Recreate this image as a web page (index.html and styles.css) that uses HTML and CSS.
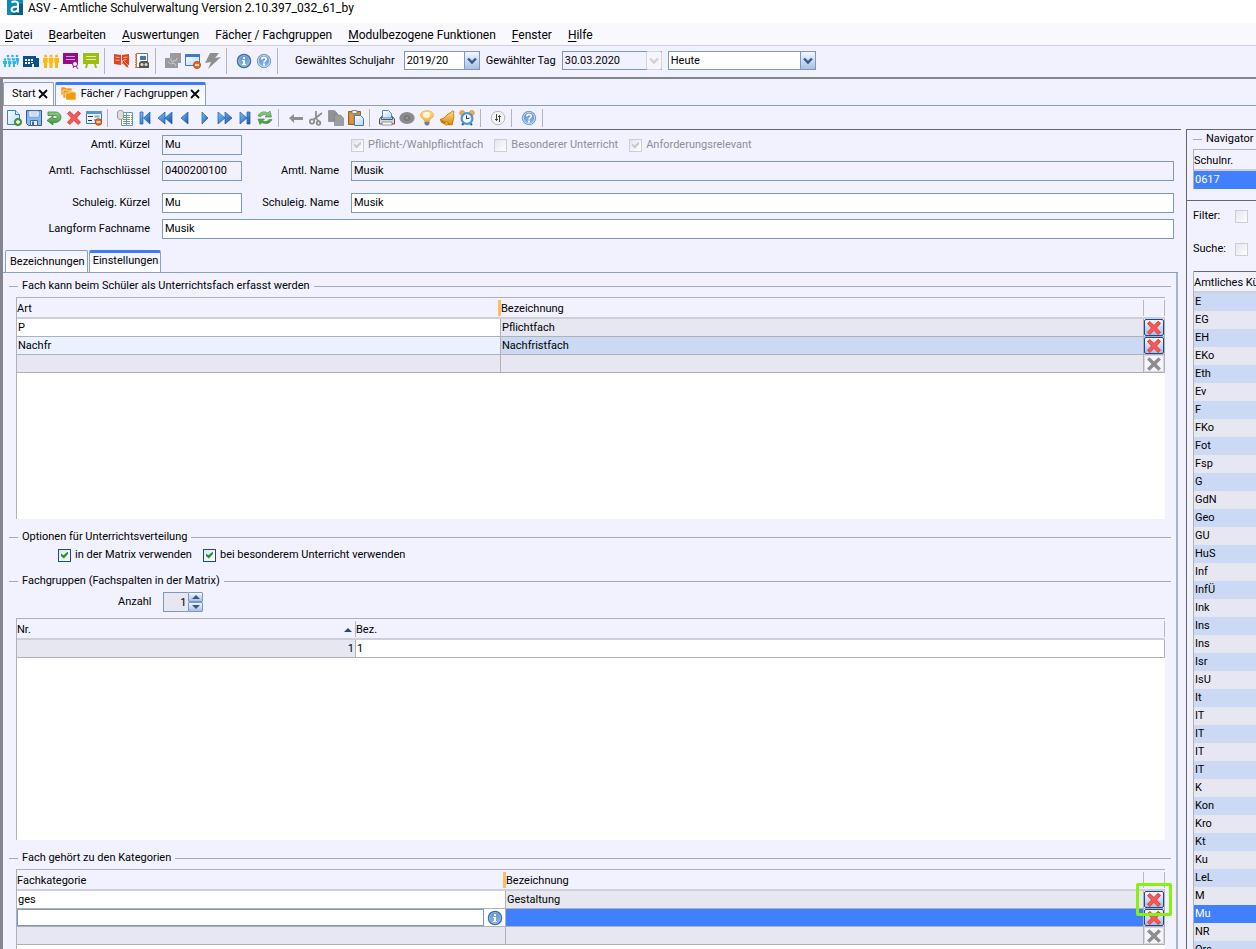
FILE: index.html
```html
<!DOCTYPE html>
<html lang="de">
<head>
  <meta charset="UTF-8" />
  <meta name="viewport" content="width=device-width, initial-scale=1.0" />
  <title>ASV - Amtliche Schulverwaltung</title>
  <link rel="stylesheet" href="styles.css">
</head>
<body>
  <svg class="sprite" aria-hidden="true">
    <defs>
      <linearGradient id="g-blue" x1="0" y1="0" x2="1" y2="1"><stop offset="0" stop-color="#7fc4f5"/><stop offset="1" stop-color="#1555b5"/></linearGradient>
      <linearGradient id="g-round" x1="0" y1="0" x2="0" y2="1"><stop offset="0" stop-color="#5d8fc9"/><stop offset="1" stop-color="#8db9e6"/></linearGradient>
      <linearGradient id="g-paper" x1="0" y1="0" x2="1" y2="1"><stop offset="0" stop-color="#fff"/><stop offset="1" stop-color="#b4dafa"/></linearGradient>
      <linearGradient id="g-gold" x1="0" y1="0" x2="0" y2="1"><stop offset="0" stop-color="#ffe07a"/><stop offset="1" stop-color="#e08a10"/></linearGradient>
      <linearGradient id="g-bulb" x1="0" y1="0" x2="0" y2="1"><stop offset="0" stop-color="#ffdc8c"/><stop offset="1" stop-color="#fbb348"/></linearGradient>
      <linearGradient id="g-green" x1="0" y1="0" x2="0" y2="1"><stop offset="0" stop-color="#8fce7e"/><stop offset="1" stop-color="#3e9440"/></linearGradient>
    </defs>
    <symbol id="i-logo" viewBox="0 0 16 16"><path fill="#0d88b8" d="M0 0h16v15H0z"/><path fill="#085f8e" d="M12 4h4v11H4z"/><path fill="none" stroke="#fff" stroke-width="2" d="M4.500 2.500c2-1.500 6.500-1.500 6.500 1.500v8.500M11 6.500c-3 0-6.500.3-6.500 3 0 3.300 5.500 2.800 6.500-.5"/></symbol>
    <symbol id="i-pupils" viewBox="0 0 16 16"><g fill="#35b5e0"><circle cx="5" cy="3" r="1.300"/><circle cx="9.500" cy="3" r="1.300"/><circle cx="14" cy="3" r="1.300"/><circle cx="2" cy="6.500" r="1.300"/><circle cx="6.500" cy="6.500" r="1.300"/><circle cx="11" cy="6.500" r="1.300"/><path d="M0 8h4v3H3v3H1v-3H0zM5 8h3.500v3h-1v3h-2v-3H5zM9.500 8H13v3h-1v3h-2v-3h-.5zM4 5h2l-1 3zM8.500 5h2l-1 3zM12.500 5H16v3l-1 4h-1z"/></g></symbol>
    <symbol id="i-school" viewBox="0 0 16 16"><path fill="#0a4f8e" d="M0 3h13v2h3v9h-5v-3H9v3H0z"/><path fill="#fff" d="M2 6h2v2H2zM5 6h2v2H5zM8 6h2v2H8zM2 9h2v2H2zM5 9h2v2H5zM8 9h2v1H8z"/></symbol>
    <symbol id="i-teachers" viewBox="0 0 16 16"><g fill="#fbba10"><circle cx="2.500" cy="3" r="1.600"/><circle cx="8" cy="3" r="1.600"/><circle cx="13.500" cy="3" r="1.600"/><path d="M0 5h4.700v5H4v5H1v-5H0zM5.700 5h4.600v5h-.8v5h-3v-5h-.8zM11.300 5H16v5h-1v5h-3v-5h-.7z"/></g></symbol>
    <symbol id="i-class" viewBox="0 0 16 16"><path fill="#8f0f86" d="M0 0h15v11H0z"/><path stroke="#d79bd3" d="M3 3.500h9M3 6.500h9"/><circle cx="12" cy="11" r="2.500" fill="#f2f2ff" stroke="#8f0f86"/><path stroke="#8f0f86" d="M13 13l2 3M11 13l-1 2"/></symbol>
    <symbol id="i-lesson" viewBox="0 0 16 16"><path fill="#9cbd11" d="M0 0h16v11H0zM3 11h2l-1 4H2zM11 11h2l1 4h-2z"/><path stroke="#e3efaa" d="M3 3.500h10M3 6.500h10"/></symbol>
    <symbol id="i-book" viewBox="0 0 16 16"><path fill="#e0431c" d="M0 1l7 1v10l-7-1zM8 2l7-1v11l-7-1z"/><path stroke="#f6b8a5" d="M1.500 4l4 .5M1.500 7l4 .5M9.500 4.500l4-.5M9.500 7l3-.5"/><path fill="#e0431c" stroke="#fff" stroke-width=".5" d="M9 7l5 5 1 3-3-1-4-5z"/></symbol>
    <symbol id="i-report" viewBox="0 0 16 16"><path fill="#fff" stroke="#777" d="M2.500.5h11v14h-11z"/><path stroke="#e07b28" stroke-width="2" stroke-dasharray="1.500 1" d="M2 1v14"/><path fill="#3f78bd" d="M6 3h6v4H6z"/><path fill="#555" d="M5 10l2-2h6l2 2v5H5z"/><circle cx="8" cy="11.500" r="1.500" fill="#ddd"/><circle cx="12" cy="11.500" r="1.500" fill="#ddd"/></symbol>
    <symbol id="i-puzzle" viewBox="0 0 16 16"><path fill="#9a9a9c" d="M5 0h11v10h-3v5H0V5h5z"/><path fill="none" stroke="#c9c9cd" d="M6 5v3l2 1 1-2 2 1 1-3M3 9l3 2 3-1 2 3"/></symbol>
    <symbol id="i-window" viewBox="0 0 16 16"><path fill="url(#g-paper)" stroke="#3f7ac2" d="M.5 1.500h14v11H.5z"/><path fill="#3f7ac2" d="M0 1h15v3H0z"/><circle cx="12" cy="12" r="3.500" fill="#ec6e1c" stroke="#c04c09"/><path stroke="#fff" stroke-width="1.500" d="M10 12h4"/></symbol>
    <symbol id="i-flash" viewBox="0 0 16 16"><path fill="#8f8f91" d="M5 0h9l-4 5 6-1L3 16l3-7-6 1z"/></symbol>
    <symbol id="i-info" viewBox="0 0 16 16"><circle cx="8" cy="8" r="6.500" fill="url(#g-round)" stroke="#3a6cae" stroke-width="1.500"/><circle cx="8" cy="8" r="5.500" fill="none" stroke="#b9d5f2" stroke-width=".6"/><path fill="#fff" d="M7 4h2v2H7zM6 7h3v4h1v1H6v-1h1V8H6z"/></symbol>
    <symbol id="i-help" viewBox="0 0 16 16"><circle cx="8" cy="8" r="6.700" fill="url(#g-round)" stroke="#6f9dd0"/><circle cx="8" cy="8" r="5.700" fill="none" stroke="#d4e6f8" stroke-width=".8"/><path fill="none" stroke="#fff" stroke-width="1.700" d="M5.800 6.500c0-3 4.600-2.800 4.500-.2C10.200 7.800 8 7.500 8 9.500"/><path fill="#fff" d="M7 10.500h2v2H7z"/></symbol>
    <symbol id="i-folder" viewBox="0 0 16 16"><g fill="#f39a0c" stroke="#fff" stroke-width=".6"><path d="M0 1h4l1 1h6v7H0z"/><path d="M2 4h4l1 1h6v7H2z"/><path d="M4 7h4l1-1h6v8H5z"/></g></symbol>
    <symbol id="i-close" viewBox="0 0 10 10"><path stroke="#000" stroke-width="1.800" d="M1 1l8 8M9 1L1 9"/></symbol>
    <symbol id="i-new" viewBox="0 0 16 16"><path fill="url(#g-paper)" stroke="#3f7fc4" d="M1.500.5h8l4 4v10h-12z"/><path fill="#d6ebfc" stroke="#3f7fc4" d="M9.500.5v4h4"/><circle cx="12" cy="12" r="3.500" fill="#58a243" stroke="#357a28"/><path stroke="#fff" stroke-width="1.300" d="M10 12h4M12 10v4"/></symbol>
    <symbol id="i-save" viewBox="0 0 16 16"><path fill="#8db8ea" stroke="#2b5ca0" d="M.5.5h15v15H2.500l-2-2z"/><path fill="#fff" stroke="#6190c8" stroke-width=".7" d="M3 1h10v6H3z"/><path stroke="#9ab8db" d="M4.500 3h7M4.500 5h7"/><path fill="#eee" stroke="#3b68a4" d="M4.500 10.500h7v5h-7z"/><path fill="#3b68a4" d="M6 11.500h2V15H6z"/></symbol>
    <symbol id="i-undo" viewBox="0 0 16 16"><path fill="url(#g-green)" stroke="#388a3a" stroke-width=".8" d="M2 2h7c8 0 8 10.500 0 10.500H7V15l-6-4.500L7 6v2.500h2c3 0 3-3 0-3H2z"/></symbol>
    <symbol id="i-delete" viewBox="0 0 16 16"><path fill="#f65a52" stroke="#d92a29" stroke-width=".8" d="M1.500 3.500l2.300-2L8 5.500l4-4.200 2.500 2L10.500 8l4 4.300-2.500 2.200-4-4.200-4.200 4.200-2.300-2.300L5.500 8z"/></symbol>
    <symbol id="i-delete-off" viewBox="0 0 16 16"><path fill="#8d8d8f" d="M1 3.500l2.500-2.300L8 5.500l4.500-4.300L15 3.500 10.500 8l4.500 4.500-2.500 2.300L8 10.500l-4.500 4.300L1 12.500 5.500 8z"/></symbol>
    <symbol id="i-form" viewBox="0 0 16 16"><path fill="#edf5fd" stroke="#3a75bd" d="M.5 1.500h15v12H.5z"/><path fill="#5b95d6" d="M0 1h16v3H0z"/><path stroke="#333" d="M2 6.500h5M2 10.500h4"/><path stroke="#7eaddd" stroke-width="2" d="M8.500 6.500h5M8 10h3"/><circle cx="12.500" cy="12" r="3.300" fill="#ec6e1c" stroke="#c04c09"/><path stroke="#fff" stroke-width="1.400" d="M10.500 12h4"/></symbol>
    <symbol id="i-list" viewBox="0 0 16 16"><path fill="#fff" stroke="#6593ca" d="M4.500 2.500h11v13h-11z"/><path stroke="#76a15c" stroke-dasharray="3 1" d="M6 5.500h9M6 7.500h9M6 9.500h9M6 11.500h9M6 13.500h9"/><path fill="#ddd" stroke="#888" stroke-width=".8" d="M.5 2C2-.2 5-.2 6.500 2v6C5 10 2 10 .5 8z"/><path stroke="#6593ca" d="M9.500 3v12"/></symbol>
    <symbol id="i-first" viewBox="0 0 16 16"><path fill="url(#g-blue)" stroke="#1d57b0" stroke-width=".7" d="M3 2h3v12H3zM13 2v12L6.500 8z"/></symbol>
    <symbol id="i-rewind" viewBox="0 0 16 16"><path fill="url(#g-blue)" stroke="#1d57b0" stroke-width=".7" d="M8 2v12L1 8zM15 2v12L8 8z"/></symbol>
    <symbol id="i-prev" viewBox="0 0 16 16"><path fill="url(#g-blue)" stroke="#1d57b0" stroke-width=".7" d="M11 2v12L4 8z"/></symbol>
    <symbol id="i-next" viewBox="0 0 16 16"><path fill="url(#g-blue)" stroke="#1d57b0" stroke-width=".7" d="M5 2v12l6-6z"/></symbol>
    <symbol id="i-forward" viewBox="0 0 16 16"><path fill="url(#g-blue)" stroke="#1d57b0" stroke-width=".7" d="M1 2v12l7-6zM8 2v12l7-6z"/></symbol>
    <symbol id="i-last" viewBox="0 0 16 16"><path fill="url(#g-blue)" stroke="#1d57b0" stroke-width=".7" d="M10 2h3v12h-3zM3 2v12l7-6z"/></symbol>
    <symbol id="i-refresh" viewBox="0 0 16 16"><path fill="url(#g-green)" stroke="#388a3a" stroke-width=".6" d="M1 6c2-4.500 7-5 10-3l2-2 1.500 6H8l2-2C7 4 5 5 4 6.500zM15 9.500c-2 4.500-7 5-10 3l-2 2L1 9h6.500l-2 2c3 1 5 .5 6.500-1.500z"/></symbol>
    <symbol id="i-back" viewBox="0 0 16 16"><path fill="#8f8f91" d="M1 8l5-4v3h9v3H6v3z"/></symbol>
    <symbol id="i-cut" viewBox="0 0 16 16"><g fill="none" stroke="#8c8c8e" stroke-width="1.700"><path d="M8 1v7l3 4M14 3L5 10"/><circle cx="4" cy="11.500" r="2.200"/><circle cx="10.500" cy="13" r="1.800"/></g></symbol>
    <symbol id="i-copy" viewBox="0 0 16 16"><path fill="#929294" stroke="#7e7e80" stroke-width=".6" d="M.5.500h6l3 3v8h-9z"/><path fill="#9d9d9f" stroke="#7e7e80" stroke-width=".6" d="M6.500 5h6l3 3v7.500h-9z"/></symbol>
    <symbol id="i-paste" viewBox="0 0 16 16"><path fill="#cf8b35" stroke="#94601d" d="M.5 1.500h12v13H.5z"/><path fill="#eee" stroke="#777" stroke-width=".8" d="M4 .5h5v3H4z"/><path fill="#eaa" fill-opacity=".3" d="M2 4h3v9H2z"/><path fill="url(#g-paper)" stroke="#407bc1" d="M6.500 5.500h6l3 3v7h-9z"/></symbol>
    <symbol id="i-print" viewBox="0 0 16 16"><path fill="url(#g-paper)" stroke="#4b88c8" d="M3.500 8V.5h6l3 3V8z"/><path fill="#d8d8dc" stroke="#55565c" d="M2.500 6.500L.5 9v5h15V9l-2-2.500v3h-11z"/><path fill="#f7f7f7" stroke="#777" stroke-width=".7" d="M3 12h10v3H3z"/></symbol>
    <symbol id="i-eye" viewBox="0 0 16 16"><ellipse cx="8" cy="8" rx="7.700" ry="6" fill="#8c8c8e"/><ellipse cx="8" cy="8" rx="3.500" ry="3" fill="#7b7b7d"/><circle cx="8" cy="8" r="1" fill="#a5a5a7"/></symbol>
    <symbol id="i-bulb" viewBox="0 0 16 16"><path fill="url(#g-bulb)" stroke="#e9a243" stroke-width=".8" d="M8 .8c4 0 6.500 2.200 6.500 4.700S11 8.500 10.500 11h-5C5 8.500 1.500 8 1.500 5.500S4 .8 8 .8z"/><ellipse cx="7.500" cy="5" rx="3.500" ry="3" fill="#fff8d4"/><path fill="#777d88" d="M5.500 11.500h5V14L9 15.500H7L5.500 14z"/></symbol>
    <symbol id="i-bell" viewBox="0 0 16 16"><path fill="url(#g-gold)" stroke="#b06b0a" stroke-width=".8" d="M13.500.8l1.500 1-.5 1.700c.8 3 .2 5.500-.5 7.500l-1 4L1 9.500l4-1.500c2-2 3.500-4.500 7-5.500z"/><path fill="#c67c10" d="M1 9.500L13 15c-1.500 1-12 0-12-5.500z"/><circle cx="7.500" cy="13.500" r="1.700" fill="#f2bd43" stroke="#a8660b" stroke-width=".6"/></symbol>
    <symbol id="i-alarm" viewBox="0 0 16 16"><path stroke="#2c5da3" stroke-width="2" d="M3 15l2-2M13 15l-2-2"/><circle cx="3.200" cy="3" r="2.500" fill="#f0b13d" stroke="#c9861c" stroke-width=".6"/><circle cx="12.800" cy="3" r="2.500" fill="#f0b13d" stroke="#c9861c" stroke-width=".6"/><circle cx="8" cy="8.500" r="5.400" fill="#f4faff" stroke="#4e94d8" stroke-width="2.200"/><path fill="none" stroke="#333" d="M7.500 5.500v3.300L10.500 8"/></symbol>
    <symbol id="i-adjust" viewBox="0 0 16 16"><circle cx="8" cy="8" r="6.800" fill="#f3f3f3" stroke="#b9b9bd"/><path stroke="#444" d="M6.500 4v7M9.500 5v7M5 9.500h3M8 6.500h3"/></symbol>
    <symbol id="i-arrow" viewBox="0 0 10 8"><path fill="none" stroke="currentColor" stroke-width="2.400" d="M1 1.500l4 4 4-4"/></symbol>
    <symbol id="i-up" viewBox="0 0 8 4"><path fill="currentColor" d="M0 4l4-4 4 4z"/></symbol>
    <symbol id="i-down" viewBox="0 0 8 4"><path fill="currentColor" d="M0 0l4 4 4-4z"/></symbol>
  </svg>

  <header class="titlebar">
    <svg class="icon"><use href="#i-logo"/></svg>
    <span>ASV - Amtliche Schulverwaltung Version 2.10.397_032_61_by</span>
  </header>

  <nav class="menubar">
    <a href="#"><u>D</u>atei</a>
    <a href="#"><u>B</u>earbeiten</a>
    <a href="#"><u>A</u>uswertungen</a>
    <a href="#">Fäche<u>r</u> / Fachgruppen</a>
    <a href="#"><u>M</u>odulbezogene Funktionen</a>
    <a href="#"><u>F</u>enster</a>
    <a href="#"><u>H</u>ilfe</a>
  </nav>

  <div class="toolbar main-tools">
    <button class="tool" aria-label="Schüler"><svg class="icon"><use href="#i-pupils"/></svg></button>
    <button class="tool" aria-label="Schulen"><svg class="icon"><use href="#i-school"/></svg></button>
    <button class="tool" aria-label="Lehrkräfte"><svg class="icon"><use href="#i-teachers"/></svg></button>
    <button class="tool" aria-label="Klassen"><svg class="icon"><use href="#i-class"/></svg></button>
    <button class="tool" aria-label="Unterricht"><svg class="icon"><use href="#i-lesson"/></svg></button>
    <span class="sep"></span>
    <button class="tool" aria-label="Notenbuch"><svg class="icon"><use href="#i-book"/></svg></button>
    <button class="tool" aria-label="Berichte"><svg class="icon"><use href="#i-report"/></svg></button>
    <span class="sep"></span>
    <button class="tool" aria-label="Module" disabled><svg class="icon"><use href="#i-puzzle"/></svg></button>
    <button class="tool" aria-label="Fenster schließen"><svg class="icon"><use href="#i-window"/></svg></button>
    <button class="tool" aria-label="Ausführen" disabled><svg class="icon"><use href="#i-flash"/></svg></button>
    <span class="sep"></span>
    <button class="tool" aria-label="Info"><svg class="icon"><use href="#i-info"/></svg></button>
    <button class="tool" aria-label="Hilfe"><svg class="icon"><use href="#i-help"/></svg></button>
    <span class="sep"></span>
    <div class="period">
      <label for="year">Gewähltes Schuljahr</label>
      <span class="combo year">
        <select id="year"><option>2019/20</option></select>
        <span class="combo-arrow"><svg><use href="#i-arrow"/></svg></span>
      </span>
      <label for="day">Gewählter Tag</label>
      <span class="combo day">
        <select id="day" disabled><option>30.03.2020</option></select>
        <span class="combo-arrow"><svg><use href="#i-arrow"/></svg></span>
      </span>
      <span class="combo today">
        <select aria-label="Tag"><option>Heute</option></select>
        <span class="combo-arrow"><svg><use href="#i-arrow"/></svg></span>
      </span>
    </div>
  </div>

  <div class="workspace">
    <div class="doc-tabs">
      <div class="tab">
        <a href="#">Start</a>
        <button class="close" aria-label="Start schließen"><svg><use href="#i-close"/></svg></button>
      </div>
      <div class="tab active">
        <svg class="icon"><use href="#i-folder"/></svg>
        <a href="#">Fächer / Fachgruppen</a>
        <button class="close" aria-label="Fächer schließen"><svg><use href="#i-close"/></svg></button>
      </div>
    </div>

    <div class="toolbar doc-tools">
      <button class="tool" aria-label="Neu"><svg class="icon"><use href="#i-new"/></svg></button>
      <button class="tool" aria-label="Speichern"><svg class="icon"><use href="#i-save"/></svg></button>
      <button class="tool" aria-label="Rückgängig"><svg class="icon"><use href="#i-undo"/></svg></button>
      <button class="tool" aria-label="Löschen"><svg class="icon"><use href="#i-delete"/></svg></button>
      <button class="tool" aria-label="Formular schließen"><svg class="icon"><use href="#i-form"/></svg></button>
      <span class="sep"></span>
      <button class="tool" aria-label="Liste"><svg class="icon"><use href="#i-list"/></svg></button>
      <button class="tool" aria-label="Erster"><svg class="icon"><use href="#i-first"/></svg></button>
      <button class="tool" aria-label="Seite zurück"><svg class="icon"><use href="#i-rewind"/></svg></button>
      <button class="tool" aria-label="Voriger"><svg class="icon"><use href="#i-prev"/></svg></button>
      <button class="tool" aria-label="Nächster"><svg class="icon"><use href="#i-next"/></svg></button>
      <button class="tool" aria-label="Seite vor"><svg class="icon"><use href="#i-forward"/></svg></button>
      <button class="tool" aria-label="Letzter"><svg class="icon"><use href="#i-last"/></svg></button>
      <button class="tool" aria-label="Aktualisieren"><svg class="icon"><use href="#i-refresh"/></svg></button>
      <span class="sep"></span>
      <button class="tool" aria-label="Zurück" disabled><svg class="icon"><use href="#i-back"/></svg></button>
      <button class="tool" aria-label="Ausschneiden" disabled><svg class="icon"><use href="#i-cut"/></svg></button>
      <button class="tool" aria-label="Kopieren" disabled><svg class="icon"><use href="#i-copy"/></svg></button>
      <button class="tool" aria-label="Einfügen"><svg class="icon"><use href="#i-paste"/></svg></button>
      <span class="sep"></span>
      <button class="tool" aria-label="Drucken"><svg class="icon"><use href="#i-print"/></svg></button>
      <button class="tool" aria-label="Vorschau" disabled><svg class="icon"><use href="#i-eye"/></svg></button>
      <button class="tool" aria-label="Tipp"><svg class="icon"><use href="#i-bulb"/></svg></button>
      <button class="tool" aria-label="Benachrichtigung"><svg class="icon"><use href="#i-bell"/></svg></button>
      <button class="tool" aria-label="Wiedervorlage"><svg class="icon"><use href="#i-alarm"/></svg></button>
      <span class="sep"></span>
      <button class="tool" aria-label="Einstellungen"><svg class="icon"><use href="#i-adjust"/></svg></button>
      <span class="sep"></span>
      <button class="tool" aria-label="Hilfe zum Modul"><svg class="icon"><use href="#i-help"/></svg></button>
      <span class="sep"></span>
    </div>

    <div class="columns">
      <main class="detail">
        <form class="form">
          <div class="form-block">
            <label for="akz">Amtl. Kürzel</label>
            <input class="text" id="akz" value="Mu" readonly>
            <div class="flags">
              <label><input type="checkbox" class="check" checked disabled> Pflicht-/Wahlpflichtfach</label>
              <label><input type="checkbox" class="check" disabled> Besonderer Unterricht</label>
              <label><input type="checkbox" class="check" checked disabled> Anforderungsrelevant</label>
            </div>
            <label for="key">Amtl.&nbsp; Fachschlüssel</label>
            <input class="text" id="key" value="0400200100" readonly>
            <label for="aname">Amtl. Name</label>
            <input class="text" id="aname" value="Musik" readonly>
          </div>
          <div class="form-block">
            <label for="skz">Schuleig. Kürzel</label>
            <input class="text" id="skz" value="Mu">
            <label for="sname">Schuleig. Name</label>
            <input class="text" id="sname" value="Musik">
            <label for="long">Langform Fachname</label>
            <input class="text wide" id="long" value="Musik">
          </div>
        </form>

        <div class="sub-tabs">
          <a class="tab" href="#">Bezeichnungen</a>
          <a class="tab active" href="#">Einstellungen</a>
        </div>

        <div class="settings">
          <section>
            <h2>Fach kann beim Schüler als Unterrichtsfach erfasst werden</h2>
            <div class="pane">
              <table>
                <colgroup><col class="col-art"><col><col class="col-del"></colgroup>
                <thead>
                  <tr><th class="drop">Art</th><th>Bezeichnung</th><th></th></tr>
                </thead>
                <tbody>
                  <tr><td>P</td><td class="locked">Pflichtfach</td><td class="del"><button aria-label="Pflichtfach löschen"><svg class="icon"><use href="#i-delete"/></svg></button></td></tr>
                  <tr class="marked"><td>Nachfr</td><td>Nachfristfach</td><td class="del"><button aria-label="Nachfristfach löschen"><svg class="icon"><use href="#i-delete"/></svg></button></td></tr>
                  <tr class="empty"><td></td><td></td><td class="del"><button aria-label="Löschen" disabled><svg class="icon"><use href="#i-delete-off"/></svg></button></td></tr>
                </tbody>
              </table>
            </div>
          </section>

          <section>
            <h2>Optionen für Unterrichtsverteilung</h2>
            <div class="options">
              <label><input type="checkbox" class="check" checked> in der Matrix verwenden</label>
              <label><input type="checkbox" class="check" checked> bei besonderem Unterricht verwenden</label>
            </div>
          </section>

          <section>
            <h2>Fachgruppen (Fachspalten in der Matrix)</h2>
            <div class="count">
              <label for="count">Anzahl</label>
              <span class="spinner">
                <input type="number" id="count" value="1">
                <span class="steps">
                  <button aria-label="Mehr"><svg><use href="#i-up"/></svg></button>
                  <button aria-label="Weniger"><svg><use href="#i-down"/></svg></button>
                </span>
              </span>
            </div>
            <div class="pane">
              <table>
                <colgroup><col class="col-nr"><col></colgroup>
                <thead>
                  <tr><th><span class="sorted">Nr. <svg><use href="#i-up"/></svg></span></th><th>Bez.</th></tr>
                </thead>
                <tbody>
                  <tr><td class="locked num">1</td><td>1</td></tr>
                </tbody>
              </table>
            </div>
          </section>

          <section>
            <h2>Fach gehört zu den Kategorien</h2>
            <div class="pane">
              <table>
                <colgroup><col class="col-kat"><col><col class="col-del"></colgroup>
                <thead>
                  <tr><th class="drop">Fachkategorie</th><th>Bezeichnung</th><th></th></tr>
                </thead>
                <tbody>
                  <tr><td>ges</td><td class="locked">Gestaltung</td><td class="del"><button aria-label="Gestaltung löschen"><svg class="icon"><use href="#i-delete"/></svg></button><span class="highlight"></span></td></tr>
                  <tr><td class="edit"><div class="lookup"><input aria-label="Fachkategorie"><button aria-label="Auswahl"><svg class="icon"><use href="#i-info"/></svg></button></div></td><td class="selected"></td><td class="del"><button aria-label="Kategorie löschen"><svg class="icon"><use href="#i-delete"/></svg></button></td></tr>
                  <tr class="empty"><td></td><td></td><td class="del"><button aria-label="Löschen" disabled><svg class="icon"><use href="#i-delete-off"/></svg></button></td></tr>
                </tbody>
              </table>
            </div>
          </section>
        </div>
      </main>

      <aside class="navigator">
        <div class="nav-school">
          <h2>Navigator</h2>
          <table>
            <thead><tr><th>Schulnr.</th></tr></thead>
            <tbody><tr><td class="selected">0617</td></tr></tbody>
          </table>
        </div>
        <div class="nav-filter">
          <label for="filter">Filter:</label><input type="checkbox" class="check off" id="filter">
          <label for="search">Suche:</label><input type="checkbox" class="check off" id="search">
        </div>
        <table class="subjects">
          <thead><tr><th>Amtliches Kürzel</th></tr></thead>
          <tbody>
            <tr><td>E</td></tr>
            <tr><td>EG</td></tr>
            <tr><td>EH</td></tr>
            <tr><td>EKo</td></tr>
            <tr><td>Eth</td></tr>
            <tr><td>Ev</td></tr>
            <tr><td>F</td></tr>
            <tr><td>FKo</td></tr>
            <tr><td>Fot</td></tr>
            <tr><td>Fsp</td></tr>
            <tr><td>G</td></tr>
            <tr><td>GdN</td></tr>
            <tr><td>Geo</td></tr>
            <tr><td>GU</td></tr>
            <tr><td>HuS</td></tr>
            <tr><td>Inf</td></tr>
            <tr><td>InfÜ</td></tr>
            <tr><td>Ink</td></tr>
            <tr><td>Ins</td></tr>
            <tr><td>Ins</td></tr>
            <tr><td>Isr</td></tr>
            <tr><td>IsU</td></tr>
            <tr><td>It</td></tr>
            <tr><td>IT</td></tr>
            <tr><td>IT</td></tr>
            <tr><td>IT</td></tr>
            <tr><td>IT</td></tr>
            <tr><td>K</td></tr>
            <tr><td>Kon</td></tr>
            <tr><td>Kro</td></tr>
            <tr><td>Kt</td></tr>
            <tr><td>Ku</td></tr>
            <tr><td>LeL</td></tr>
            <tr><td>M</td></tr>
            <tr><td class="selected">Mu</td></tr>
            <tr><td>NR</td></tr>
            <tr><td>Ors</td></tr>
          </tbody>
        </table>
      </aside>
    </div>
  </div>
</body>
</html>
```

FILE: styles.css
```css
* {
  box-sizing: border-box;
}

body {
  margin: 0;
  height: 100vh;
  overflow: hidden;
  display: flex;
  flex-direction: column;
  background-color: #f2f2ff;
  color: #000;
  font-family: Roboto, "Open Sans", sans-serif;
  font-size: 11px;
  line-height: 16px;
  white-space: nowrap;
}

button,
input,
select {
  font: inherit;
  color: inherit;
  margin: 0;
}

button {
  padding: 0;
  border: none;
  background: none;
}

a {
  color: inherit;
  text-decoration: none;
}

svg {
  display: block;
  flex-shrink: 0;
}

.sprite {
  position: absolute;
  width: 0;
  height: 0;
}

.icon {
  width: 16px;
  height: 16px;
}

/* title and menu */

.titlebar {
  flex-shrink: 0;
  display: flex;
  gap: 5px;
  height: 23px;
  padding-left: 7px;
  background-color: #fff;
  font-size: 12px;
}

.menubar {
  flex-shrink: 0;
  display: flex;
  align-items: center;
  gap: 16px;
  height: 23px;
  padding: 2px 0 0 5px;
  background-color: #f8f8fd;
  border-bottom: 1px solid #d0d0d6;
  font-size: 12px;
}

.menubar u {
  text-underline-offset: 2px;
}

/* toolbars */

.toolbar {
  flex-shrink: 0;
  display: flex;
  align-items: center;
}

.tool + .tool {
  margin-left: 4px;
}

.sep {
  width: 1px;
  height: 26px;
  margin: 0 9px 0 5px;
  background-color: #b4b4ba;
}

.main-tools {
  height: 33px;
  padding: 0 0 2px 3px;
  border-bottom: 2px solid #85858c;
}

.doc-tools {
  height: 23px;
  padding-left: 3px;
}

.doc-tools .sep {
  height: 18px;
}

.period {
  display: flex;
  align-items: center;
  gap: 6px;
  padding-left: 8px;
}

.combo {
  position: relative;
}

.combo select {
  display: block;
  width: 100%;
  height: 19px;
  padding: 0 20px 0 2px;
  border: 1px solid #7c98bf;
  border-radius: 0;
  background-color: #fff;
  appearance: none;
  opacity: 1;
}

.combo select:disabled {
  background-color: #f2f2ff;
}

.combo-arrow {
  position: absolute;
  top: 0;
  right: 0;
  display: flex;
  align-items: center;
  justify-content: center;
  width: 16px;
  height: 19px;
  border: 1px solid #7c98bf;
  border-radius: 2px;
  background: linear-gradient(#f4f7ff, #a9bfe6);
  color: #33588a;
  pointer-events: none;
}

.combo-arrow svg {
  width: 10px;
  height: 8px;
}

.combo select:disabled + .combo-arrow {
  border-color: #d6d6de;
  background: #f5f5fb;
  color: #d0d0d8;
}

.year {
  width: 76px;
  margin-left: 3px;
}

.day {
  width: 100px;
}

.today {
  width: 148px;
}

/* document tabs */

.workspace {
  flex: 1;
  min-height: 0;
  display: flex;
  flex-direction: column;
  border-left: 3px solid #85858f;
}

.doc-tabs,
.sub-tabs {
  flex-shrink: 0;
  display: flex;
  align-items: flex-end;
  gap: 1px;
  border-bottom: 1px solid #8c9fbc;
}

.doc-tabs {
  height: 27px;
}

.tab {
  display: flex;
  align-items: center;
  gap: 2px;
  height: 23px;
  border: 1px solid #8c9fbc;
  border-bottom: none;
  border-radius: 2px 2px 0 0;
  background: linear-gradient(#f2f2ff, #fff);
}

.tab.active {
  border-top: 3px solid #3d7bf5;
  padding-bottom: 3px;
}

.doc-tabs .tab {
  padding-left: 8px;
  padding-right: 5px;
}

.doc-tabs .active {
  padding-left: 5px;
}

.doc-tabs .active .icon {
  margin-right: 2px;
}

.close svg {
  width: 10px;
  height: 10px;
}

.columns {
  flex: 1;
  min-height: 0;
  display: flex;
  gap: 5px;
}

.detail {
  flex: 1;
  min-width: 0;
  display: flex;
  flex-direction: column;
  border-top: 1px solid #66666c;
  padding-right: 3px;
}

/* subject form */

.form {
  display: flex;
  flex-direction: column;
  gap: 12px;
  padding: 5px 4px 11px 0;
}

.form-block {
  display: grid;
  grid-template-columns: 147px 80px 85px 1fr;
  gap: 6px 12px;
  align-items: center;
}

.form-block > label {
  text-align: right;
}

.text {
  width: 100%;
  height: 20px;
  padding: 0 2px 1px;
  border: 1px solid #7c98bf;
  background-color: #fff;
}

.text:read-only {
  background-color: #f2f2ff;
}

.wide {
  grid-column: 2 / -1;
}

.flags {
  grid-column: 4;
  display: flex;
  gap: 11px;
  color: #8e8e96;
}

.flags label,
.options label {
  display: flex;
  align-items: center;
  gap: 4px;
}

.check {
  width: 13px;
  height: 13px;
  border: 1px solid #1c4a86;
  background: linear-gradient(135deg, #e4e4ee, #fff);
  color: #1c9a24;
  appearance: none;
}

.check:checked::before {
  content: "";
  display: block;
  width: 7px;
  height: 7px;
  margin: 2px;
  background-color: currentColor;
  clip-path: polygon(0 30%, 35% 55%, 100% 0, 100% 35%, 40% 100%, 0 65%);
}

.check:disabled,
.check.off {
  border-color: #cdcdd6;
  color: #c8c8d0;
}

/* settings tab */

.sub-tabs {
  padding-left: 2px;
}

.sub-tabs .tab {
  height: 22px;
  padding-left: 4px;
  padding-right: 2px;
}

.sub-tabs .tab.active {
  padding-left: 3px;
}

.settings {
  flex: 1;
  min-height: 0;
  overflow: hidden;
  display: flex;
  flex-direction: column;
  gap: 9px;
  padding: 4px 5px 0 6px;
  border-right: 2px solid #a9b4c8;
}

h2 {
  display: flex;
  align-items: center;
  gap: 4px;
  margin: 0;
  height: 18px;
  font-size: 11px;
  font-weight: normal;
}

h2::before,
h2::after {
  content: "";
  flex: none;
  width: 9px;
  height: 1px;
  background-color: #a9a9b1;
}

h2::after {
  flex: 1;
}

.pane {
  height: 222px;
  margin: 2px 6px 0 7px;
  border-left: 1px solid #b0b0b5;
  background-color: #fff;
}

table {
  width: 100%;
  table-layout: fixed;
  border-collapse: separate;
  border-spacing: 0;
}

.col-art {
  width: 484px;
}

.col-kat {
  width: 489px;
}

.col-nr {
  width: 339px;
}

.col-del {
  width: 21px;
}

th {
  height: 22px;
  padding: 2px 0 0;
  border-top: 1px solid #b0b0b5;
  border-bottom: 2px solid #cfcfd9;
  background: linear-gradient(#b8b8c0, #b8b8c0) right center / 1px 16px no-repeat #f2f2ff;
  font-weight: normal;
  text-align: left;
}

th.drop {
  background: linear-gradient(#fdbf5e, #fdbf5e) right center / 3px 16px no-repeat #f2f2ff;
}

td {
  height: 18px;
  padding: 0 1px;
  border-right: 1px solid #b0b0b5;
  border-bottom: 1px solid #b0b0b5;
  background-color: #fff;
}

.locked,
.empty td {
  background-color: #e7e7f1;
}

.marked td {
  background-color: #eaf1ff;
}

.marked td + td {
  background-color: #ccd9f5;
}

.num {
  text-align: right;
}

td.selected {
  background-color: #4080ff;
  color: #fff;
}

.sorted {
  display: flex;
  align-items: center;
  justify-content: space-between;
  padding-right: 4px;
}

.sorted svg {
  width: 8px;
  height: 4px;
  color: #2c4766;
}

.del {
  position: relative;
  padding: 0;
}

.del button {
  display: flex;
  justify-content: center;
  align-items: center;
  width: 100%;
  height: 17px;
  border: 1px solid #1c4a86;
  border-radius: 2px;
  background: linear-gradient(#f4f7ff, #a9bfe6);
}

.del button:disabled {
  border-color: #d6d6de;
  background: #f5f5fb;
}

/* green marker around the delete button */
.highlight {
  position: absolute;
  inset: -8px;
  z-index: 1;
  border: 3px solid #86f30c;
  border-radius: 2px;
  pointer-events: none;
}

td.edit {
  padding: 0;
}

.lookup {
  display: flex;
  gap: 3px;
  padding-right: 2px;
}

.lookup input {
  flex: 1;
  min-width: 0;
  height: 17px;
  padding: 0 2px;
  border: 1px solid #7c98bf;
}

.options {
  display: flex;
  gap: 11px;
  height: 16px;
  margin-top: 1px;
  padding-left: 49px;
}

.count {
  display: flex;
  align-items: center;
  gap: 12px;
  margin: 2px 0 6px;
  padding-left: 109px;
}

.spinner {
  display: flex;
}

.spinner input {
  width: 25px;
  height: 20px;
  padding: 0 2px;
  border: 1px solid #7c98bf;
  border-right: none;
  background-color: #e7e7f1;
  text-align: right;
  appearance: textfield;
}

.spinner input::-webkit-inner-spin-button {
  display: none;
}

.steps {
  display: flex;
  flex-direction: column;
}

.steps button {
  display: flex;
  align-items: center;
  justify-content: center;
  width: 15px;
  height: 10px;
  border: 1px solid #7c98bf;
  border-radius: 1px;
  background: linear-gradient(#f4f7ff, #a9bfe6);
  color: #33588a;
}

.steps svg {
  width: 8px;
  height: 4px;
}

/* navigator */

.navigator {
  width: 70px;
  overflow: hidden;
  border-top: 1px solid #66666c;
  border-left: 1px solid #66666c;
}

.navigator th {
  overflow: hidden;
  background: #f2f2ff;
}

.navigator td {
  border: none;
}

.nav-school {
  padding: 0 0 11px 6px;
  border-bottom: 1px solid #66666c;
}

.nav-school table {
  margin-top: 1px;
  border-left: 1px solid #b0b0b5;
}

.nav-school h2::after {
  display: none;
}

.nav-filter {
  display: grid;
  grid-template-columns: 36px 13px;
  grid-auto-rows: 20px;
  gap: 13px 6px;
  align-items: center;
  padding: 5px 0 12px 6px;
}

.subjects {
  width: auto;
  min-width: 63px;
  margin-left: 6px;
  border-left: 1px solid #b0b0b5;
}

.subjects th {
  border-top-color: #66666c;
}

.subjects tr:nth-child(odd) td {
  background-color: #ccd9f5;
}

.subjects tr:nth-child(even) td {
  background-color: #e7e7f1;
}

.subjects tr td.selected {
  background-color: #4080ff;
}
```
